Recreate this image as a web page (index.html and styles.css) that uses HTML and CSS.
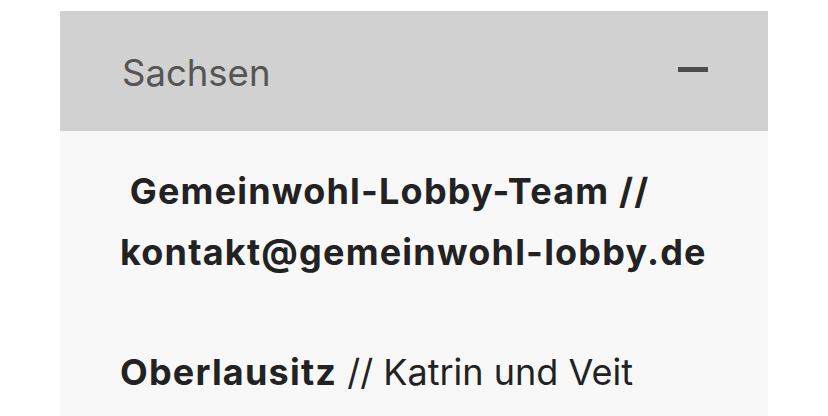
FILE: index.html
```html
<!DOCTYPE html>
<html lang="de">
<head>
  <meta charset="UTF-8" />
  <meta name="viewport" content="width=device-width, initial-scale=1.0" />
  <title>Regionalgruppen</title>
  <link rel="stylesheet" href="styles.css">
</head>
<body>
  <div class="accordion">
    <div class="accordion-item open">
      <button class="accordion-header" type="button">
        <span class="accordion-title">Sachsen</span>
        <span class="toggle-icon"></span>
      </button>
      <div class="accordion-body">
        <p><strong>&nbsp;Gemeinwohl-Lobby-Team //<br><span class="nowrap">kontakt@gemeinwohl-lobby.de</span></strong></p>
        <p><strong>Oberlausitz</strong> // Katrin und Veit<br>Hoffmann, Zittau, oberlausitz@gemeinwohl-lobby.de</p>
      </div>
    </div>
  </div>
</body>
</html>
```

FILE: styles.css
```css
* { box-sizing: border-box; }
body {
  margin: 0;
  background-color: #ffffff;
  font-family: Inter, "Noto Sans", "Liberation Sans", sans-serif;
  color: #222222;
}
.accordion {
  margin: 11px 60px 0;
}

/* Header */
.accordion-header {
  display: flex;
  align-items: center;
  justify-content: space-between;
  width: 100%;
  height: 120px;
  padding: 3px 60px 0 62px;
  border: none;
  background-color: #d1d1d1;
  font-family: inherit;
  cursor: pointer;
}
.accordion-title {
  font-size: 36.5px;
  font-weight: 400;
  color: #555555;
}
.toggle-icon {
  width: 30px;
  height: 5px;
  margin-bottom: 7px;
  background-color: #4d4d4d;
}

/* Body */
.accordion-body {
  background-color: #f8f8f8;
  padding: 30px 60px 0;
  font-size: 36px;
  line-height: 61px;
}
.accordion-body p { margin: 0 0 59px; }
.accordion-body strong {
  font-weight: 700;
  letter-spacing: 1.2px;
}
.nowrap { white-space: nowrap; }
```
